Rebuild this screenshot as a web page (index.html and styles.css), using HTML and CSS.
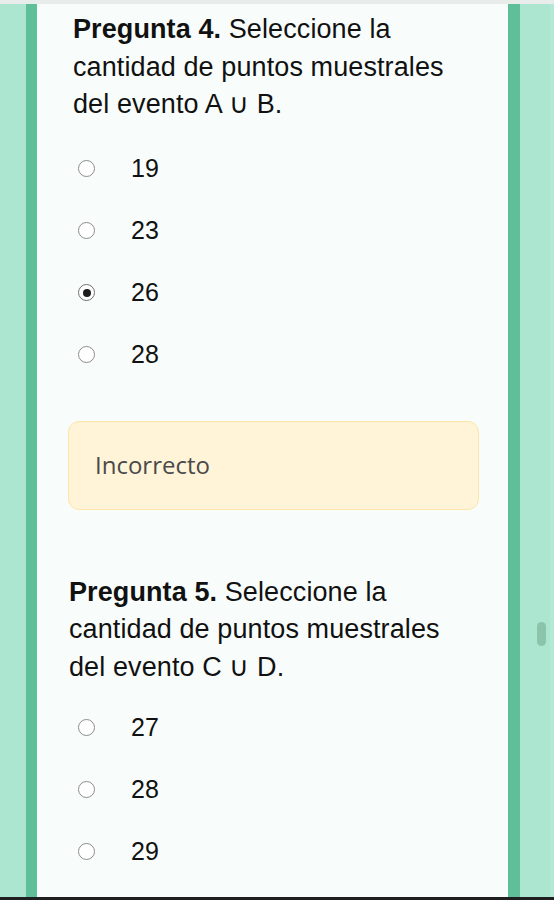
FILE: index.html
```html
<!DOCTYPE html>
<html lang="es">
<head>
<meta charset="utf-8">
<title>Preguntas</title>
<link rel="stylesheet" href="styles.css">
</head>
<body>
<div class="screen">
  <div class="topband"></div>
  <div class="stage">
    <div class="frame">
      <section class="question q4">
        <p class="prompt"><b>Pregunta 4.</b> Seleccione la cantidad de puntos muestrales del evento A ∪ B.</p>
        <ul class="options">
          <li class="option"><span class="radio"></span><span class="label">19</span></li>
          <li class="option"><span class="radio"></span><span class="label">23</span></li>
          <li class="option"><span class="radio checked"></span><span class="label">26</span></li>
          <li class="option"><span class="radio"></span><span class="label">28</span></li>
        </ul>
        <div class="feedback">Incorrecto</div>
      </section>
      <section class="question q5">
        <p class="prompt"><b>Pregunta 5.</b> Seleccione la cantidad de puntos muestrales del evento C ∪ D.</p>
        <ul class="options">
          <li class="option"><span class="radio"></span><span class="label">27</span></li>
          <li class="option"><span class="radio"></span><span class="label">28</span></li>
          <li class="option"><span class="radio"></span><span class="label">29</span></li>
        </ul>
      </section>
    </div>
    <div class="side"></div>
  </div>
  <div class="bottomline"></div>
  <div class="thumb"></div>
</div>
</body>
</html>
```
FILE: styles.css
```css
html, body {
  margin: 0;
  padding: 0;
}
body {
  background: #ace6d0;
  font-family: "Liberation Sans", Arial, sans-serif;
  color: #111;
}
.screen {
  position: relative;
  width: 554px;
  height: 900px;
  overflow: hidden;
  display: flex;
  flex-direction: column;
  background: #ace6d0;
}
.topband {
  height: 4px;
  background: #e8ecea;
  flex: none;
}
.stage {
  flex: 1;
  display: flex;
  padding-left: 26px;
  overflow: hidden;
}
.frame {
  width: 471px;
  flex: none;
  background: #f8fdfc;
  border-left: 11px solid #5ebf99;
  border-right: 12px solid #5ebf99;
  overflow: hidden;
}
.side {
  flex: 1;
  border-right: 4px solid #b4e9d5;
}
.bottomline {
  height: 3px;
  background: #1f1f1f;
  flex: none;
}
.thumb {
  position: absolute;
  left: 537px;
  top: 622px;
  width: 9px;
  height: 24px;
  border-radius: 5px;
  background: #8cc4ab;
}
.question {
  margin: 0;
}
.prompt {
  margin: 0;
  font-size: 27px;
  line-height: 37.5px;
  letter-spacing: 0.1px;
  color: #111;
}
.prompt b {
  font-weight: bold;
}
.q4 .prompt {
  padding: 7px 40px 0 36px;
}
.q5 .prompt {
  padding: 0 44px 0 32px;
  margin-top: 64px;
}
.options {
  list-style: none;
  margin: 14px 0 0 0;
  padding: 0 0 0 41px;
}
.q5 .options {
  margin-top: 10px;
}
.option {
  height: 62px;
  display: flex;
  align-items: center;
}
.radio {
  box-sizing: border-box;
  width: 17px;
  height: 17px;
  border: 1.6px solid #8c8c8c;
  border-radius: 50%;
  background: #fff;
  display: flex;
  align-items: center;
  justify-content: center;
  flex: none;
}
.radio.checked {
  border-color: #707070;
}
.radio.checked::after {
  content: "";
  width: 8px;
  height: 8px;
  border-radius: 50%;
  background: #1c1c1c;
}
.label {
  margin-left: 36px;
  font-size: 25px;
  color: #111;
}
.feedback {
  box-sizing: border-box;
  margin: 35px 0 0 31px;
  width: 411px;
  height: 89px;
  border: 1.5px solid #fbe6a6;
  border-radius: 11px;
  background: #fff4d8;
  display: flex;
  align-items: center;
  padding-left: 26px;
  padding-bottom: 2px;
  font-family: "Open Sans", "Noto Sans", sans-serif;
  font-size: 24px;
  color: #4a4a4a;
}
```
